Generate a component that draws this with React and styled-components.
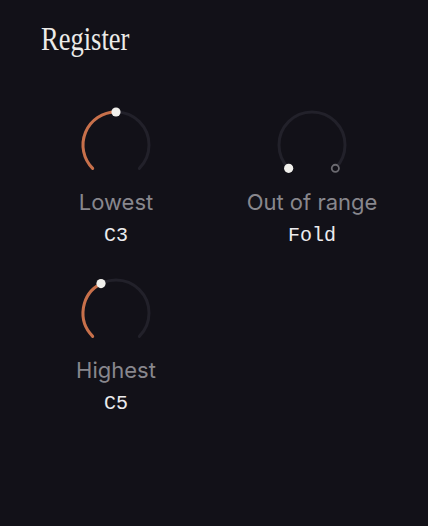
import React from "react";
import styled, { createGlobalStyle } from "styled-components";

const GlobalStyle = createGlobalStyle`
  html, body {
    margin: 0;
    padding: 0;
    background: #121118;
  }
  body {
    font-family: Inter, "Noto Sans", sans-serif;
  }
`;

const Page = styled.div`
  width: 428px;
  height: 526px;
  box-sizing: border-box;
  padding: 19px 18px 0;
  background: #121118;
  overflow: hidden;
`;

const Title = styled.h1`
  margin: 0 0 46px 23px;
  height: 40px;
  font-family: "Liberation Serif", serif;
  font-weight: 400;
  font-size: 34px;
  line-height: 40px;
  color: #ecebe8;
  transform: scaleX(0.78);
  transform-origin: left center;
`;

const Grid = styled.div`
  display: grid;
  grid-template-columns: 196px 196px;
  row-gap: 25px;
`;

const Cell = styled.div`
  display: flex;
  flex-direction: column;
  align-items: center;
`;

const Label = styled.div`
  margin-top: 5px;
  font-size: 22px;
  line-height: 24px;
  color: #88878d;
`;

const Value = styled.div`
  margin-top: 10px;
  font-family: "Liberation Mono", "DejaVu Sans Mono", monospace;
  font-size: 20px;
  line-height: 24px;
  color: #ecebee;
`;

const CX = 40;
const CY = 40;
const R = 33;

const pt = (deg) => {
  const a = (deg * Math.PI) / 180;
  return [CX + R * Math.sin(a), CY - R * Math.cos(a)];
};

const arc = (from, to) => {
  const [x1, y1] = pt(from);
  const [x2, y2] = pt(to);
  const large = to - from > 180 ? 1 : 0;
  return `M ${x1} ${y1} A ${R} ${R} 0 ${large} 1 ${x2} ${y2}`;
};

const Knob = ({ value }) => {
  const angle = -135 + value * 270;
  const [dx, dy] = pt(angle);
  return (
    <svg width="80" height="80" viewBox="0 0 80 80">
      <path d={arc(-135, 135)} fill="none" stroke="#22212a" strokeWidth="3" strokeLinecap="round" />
      {value > 0 && (
        <path d={arc(-135, angle)} fill="none" stroke="#c8704a" strokeWidth="3" strokeLinecap="round" />
      )}
      <circle cx={dx} cy={dy} r="4.6" fill="#f1f0ec" />
    </svg>
  );
};

const Switch = ({ on }) => {
  const [lx, ly] = pt(-135);
  const [rx, ry] = pt(135);
  return (
    <svg width="80" height="80" viewBox="0 0 80 80">
      <path d={arc(-135, 135)} fill="none" stroke="#22212a" strokeWidth="3" strokeLinecap="round" />
      <circle cx={on ? rx : lx} cy={on ? ry : ly} r="4.6" fill="#f1f0ec" />
      <circle cx={on ? lx : rx} cy={on ? ly : ry} r="3.6" fill="#121118" stroke="#6b6a70" strokeWidth="1.8" />
    </svg>
  );
};

export default function App() {
  return (
    <>
      <GlobalStyle />
      <Page>
        <Title>Register</Title>
        <Grid>
          <Cell>
            <Knob value={0.5} />
            <Label>Lowest</Label>
            <Value>C3</Value>
          </Cell>
          <Cell>
            <Switch on={false} />
            <Label>Out of range</Label>
            <Value>Fold</Value>
          </Cell>
          <Cell>
            <Knob value={0.4} />
            <Label>Highest</Label>
            <Value>C5</Value>
          </Cell>
        </Grid>
      </Page>
    </>
  );
}
